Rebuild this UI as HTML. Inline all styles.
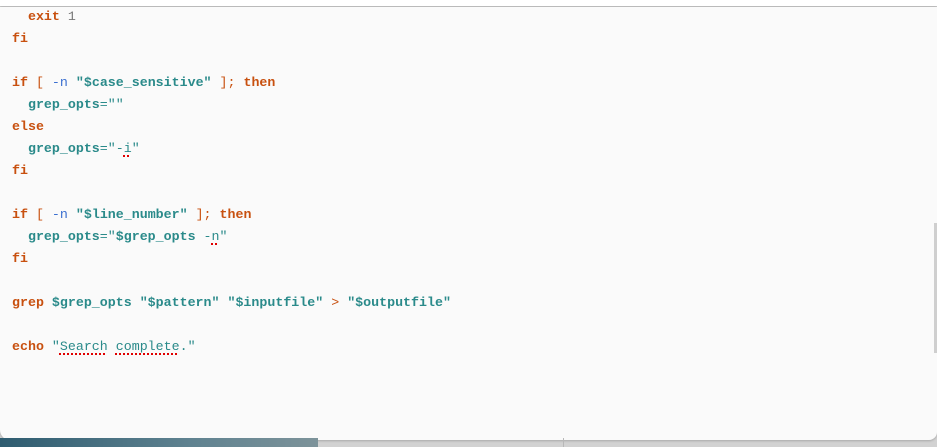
<!DOCTYPE html>
<html><head><style>
html,body{margin:0;padding:0;width:937px;height:447px;overflow:hidden;background:#d2d2d2;}
.strip{position:absolute;left:0;top:438px;width:318px;height:9px;background:linear-gradient(90deg,#2e5c70,#5f8290 60%,#7d939a);}
.div{position:absolute;left:563px;top:438px;width:1px;height:9px;background:#b8b8b8;}
.top{position:absolute;left:0;top:0;width:937px;height:6px;background:#fff;box-shadow:0 1px 2px rgba(0,0,0,.15);}
.panel{position:absolute;left:0;top:7px;width:937px;height:433px;background:#fafafa;border-radius:0 0 8px 10px;box-shadow:0 1px 2px rgba(0,0,0,.2);}
.sb{position:absolute;left:934px;width:3px;height:130px;background:#cfcfcf;}
pre{position:absolute;left:12px;top:-1px;margin:0;font-family:"Liberation Mono",monospace;font-size:13.3px;line-height:22px;color:#3a8f8f;}
.k{color:#c8500f;font-weight:bold}
.t{color:#2a8a8a;font-weight:bold}
.s{color:#2a8a8a}
.b{color:#3a6fd0}
.g{color:#777}
.o{color:#c8500f}
.sp{text-decoration-line:underline;text-decoration-style:dotted;text-decoration-color:#e00000;text-decoration-thickness:2px;text-underline-offset:3px}
</style></head><body>
<div class="top"></div>
<div class="panel">
<pre>  <span class="k">exit</span> <span class="g">1</span>
<span class="k">fi</span>

<span class="k">if</span> <span class="o">[</span> <span class="b">-n</span> <span class="t">"$case_sensitive"</span> <span class="o">];</span> <span class="k">then</span>
  <span class="t">grep_opts</span><span class="s">=""</span>
<span class="k">else</span>
  <span class="t">grep_opts</span><span class="s">="-<span class="sp">i</span>"</span>
<span class="k">fi</span>

<span class="k">if</span> <span class="o">[</span> <span class="b">-n</span> <span class="t">"$line_number"</span> <span class="o">];</span> <span class="k">then</span>
  <span class="t">grep_opts</span><span class="s">="<b>$grep_opts</b> -<span class="sp">n</span>"</span>
<span class="k">fi</span>

<span class="k">grep</span> <span class="t">$grep_opts</span> <span class="t">"$pattern"</span> <span class="t">"$inputfile"</span> <span class="o">&gt;</span> <span class="t">"$outputfile"</span>

<span class="k">echo</span> <span class="s">"<span class="sp">Search</span> <span class="sp">complete</span>."</span></pre>
<div class="sb" style="top:216px"></div>
</div>
<div class="strip"></div><div class="div"></div>
</body></html>
